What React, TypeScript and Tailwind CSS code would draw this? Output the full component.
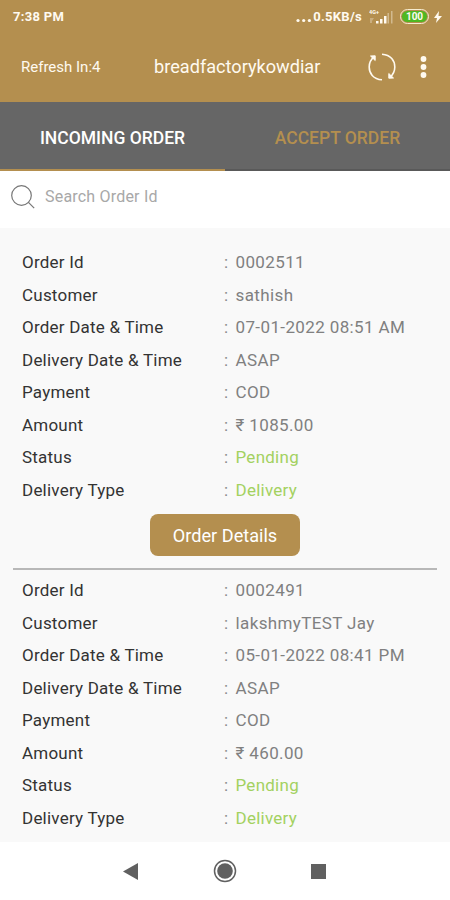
interface Order {
  id:       string
  customer: string
  date:     string
  delivery: string
  payment:  string
  amount:   string
  status:   string
  type:     string
}

const orders: Order[] = [
  {
    id: '0002511',
    customer: 'sathish',
    date: '07-01-2022 08:51 AM',
    delivery: 'ASAP',
    payment: 'COD',
    amount: '₹ 1085.00',
    status: 'Pending',
    type: 'Delivery',
  },
  {
    id: '0002491',
    customer: 'lakshmyTEST Jay',
    date: '05-01-2022 08:41 PM',
    delivery: 'ASAP',
    payment: 'COD',
    amount: '₹ 460.00',
    status: 'Pending',
    type: 'Delivery',
  },
]

function StatusBar() {
  return (
    <div className="flex h-[33px] items-center pl-[13px] pr-2 text-[13px] font-bold">
      <span className="flex-1 tracking-[0.3px]">7:38 PM</span>
      <span className="mr-[7px] flex items-center tracking-[0.3px]">
        <svg width="17" height="14" viewBox="0 0 17 14" fill="currentColor">
          <circle cx="2" cy="10.5" r="1.6" />
          <circle cx="7.7" cy="10.5" r="1.6" />
          <circle cx="13.4" cy="10.5" r="1.6" />
        </svg>
        0.5KB/s
      </span>
      <svg className="mr-1.5" width="25" height="16" viewBox="0 0 25 16" fill="currentColor">
        <text x="0" y="5" fontSize="5.5" fontWeight="700">4G+</text>
        <path d="M1 9h4l-2 3v2H1z" opacity="0.3" />
        <rect x="7" y="12" width="2.5" height="2.5" />
        <rect x="11" y="10" width="2.5" height="4.5" />
        <rect x="15" y="7" width="2.5" height="7.5" />
        <rect x="18.5" y="4" width="1.5" height="10.5" opacity="0.4" />
        <rect x="22" y="2" width="1.5" height="12.5" opacity="0.4" />
      </svg>
      <span className="flex h-[15px] w-[29px] items-center justify-center rounded-full border border-[#f6ecd0] p-px">
        <span className="flex h-full w-full items-center justify-center rounded-full bg-[#4fb822] text-[10px] leading-none">100</span>
      </span>
      <svg className="ml-[5px]" width="8" height="12" viewBox="0 0 8 12" fill="currentColor">
        <path d="M5 0 0 7h3L2 12l6-7H4.5z" />
      </svg>
    </div>
  )
}

function TopBar() {
  return (
    <div className="flex h-[68px] items-center pl-[21px] pr-[23px]">
      <span className="w-[133px] text-[15px]">Refresh In:4</span>
      <span className="flex-1 text-[18.15px]">breadfactorykowdiar</span>
      <svg className="mr-6" width="28" height="28" viewBox="0 0 28 28" fill="none" stroke="currentColor" strokeWidth="1.6">
        <path d="M14 26.7C5 26.2 1.2 20 1.2 14C1.2 9.5 3 6.2 6.2 3.6" />
        <path d="M2.5 3 7.2 2.8 7.2 7.500z" fill="currentColor" strokeWidth="1" />
        <path d="M14 1.3C23 1.8 26.8 8 26.8 14C26.8 18.5 25 21.8 21.8 24.4" />
        <path d="M25.500 25 20.800 25.200 20.800 20.500z" fill="currentColor" strokeWidth="1" />
      </svg>
      <svg width="7" height="22" viewBox="0 0 7 22" fill="currentColor">
        <circle cx="3.5" cy="3" r="2.9" />
        <circle cx="3.5" cy="11" r="2.9" />
        <circle cx="3.5" cy="19" r="2.9" />
      </svg>
    </div>
  )
}

function Row({ label, value, green }: { label: string; value: string; green?: boolean }) {
  return (
    <div className="flex h-[32.55px] items-center text-[17px]">
      <dt className="w-[202px] tracking-[0.22px] text-[#333]">{label}</dt>
      <span className="w-[11.5px] text-[#888]">:</span>
      <dd className={green ? 'tracking-[0.25px] text-[#a3d160]' : 'tracking-[0.38px] text-[#808080]'}>{value}</dd>
    </div>
  )
}

function OrderRows({ order }: { order: Order }) {
  return (
    <dl className="pl-[22px]">
      <Row label="Order Id" value={order.id} />
      <Row label="Customer" value={order.customer} />
      <Row label="Order Date & Time" value={order.date} />
      <Row label="Delivery Date & Time" value={order.delivery} />
      <Row label="Payment" value={order.payment} />
      <Row label="Amount" value={order.amount} />
      <Row label="Status" value={order.status} green />
      <Row label="Delivery Type" value={order.type} green />
    </dl>
  )
}

export default function App() {
  return (
    <div className="flex h-[900px] w-[450px] flex-col overflow-hidden bg-white font-['Roboto','Noto_Sans',sans-serif]">
      <header className="h-[102px] shrink-0 bg-[#b48f4f] text-[#fffaf0]">
        <StatusBar />
        <TopBar />
      </header>

      <nav className="flex h-[69px] shrink-0 bg-[#666] text-[17.5px] font-medium">
        <button type="button" className="w-1/2 border-b-2 border-[#b48f4f] pt-[5px] text-white">INCOMING ORDER</button>
        <button type="button" className="w-1/2 border-b-2 border-[#595959] pt-[5px] text-[#b48f4f]">ACCEPT ORDER</button>
      </nav>

      <div className="flex h-[57px] shrink-0 items-center pb-[5px] pl-[11px]">
        <svg width="24" height="24" viewBox="0 0 24 24" fill="none" stroke="#777" strokeWidth="1.2">
          <circle cx="10.5" cy="10.5" r="9.8" />
          <path d="m17.2 17.2 6 6" />
        </svg>
        <span className="ml-[10px] text-[16px] tracking-[0.2px] text-[#a8a8a8]">Search Order Id</span>
      </div>

      <main className="h-[614px] shrink-0 overflow-hidden bg-[#f9f9f9] pt-[18.7px]">
        <OrderRows order={orders[0]} />
        <div className="flex h-[61px] justify-center pt-[7px]">
          <button type="button" className="h-[42px] w-[150px] rounded-lg bg-[#b48f4f] pt-0.5 text-[18.15px] text-white">Order Details</button>
        </div>
        <hr className="mx-[13px] mb-[4.6px] border-t-2 border-[#b8b8b8]" />
        <OrderRows order={orders[1]} />
      </main>

      <footer className="flex flex-1 items-center justify-between pl-[123px] pr-[124px] text-[#606060]">
        <svg width="15" height="17" viewBox="0 0 15 17" fill="currentColor">
          <path d="M15 0v17L0 8.5z" />
        </svg>
        <svg width="24" height="24" viewBox="0 0 24 24" fill="currentColor">
          <circle cx="12" cy="12" r="10.5" fill="none" stroke="currentColor" strokeWidth="1.5" />
          <circle cx="12" cy="12" r="7.8" />
        </svg>
        <svg width="15" height="15" viewBox="0 0 15 15" fill="currentColor">
          <rect width="15" height="15" />
        </svg>
      </footer>
    </div>
  )
}
